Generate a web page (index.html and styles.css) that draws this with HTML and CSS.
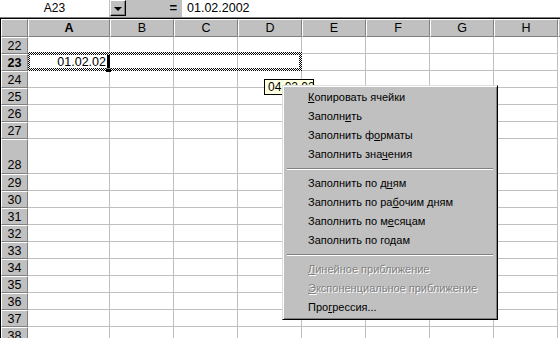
FILE: index.html
```html
<!DOCTYPE html>
<html>
    <head>
        <meta charset="utf-8">
        <link rel="stylesheet" href="styles.css">
    </head>
    <body>
        <div id="excel">
            <div id="formula-bar">
                <div class="name-box">A23</div>
                <div class="name-drop"><span class="arrow"></span></div>
                <div class="equals">=</div>
                <div class="formula">01.02.2002</div>
            </div>
            <div id="sheet">
                <div class="hd corner"></div>
                <div class="hd sel">A</div>
                <div class="hd">B</div>
                <div class="hd">C</div>
                <div class="hd">D</div>
                <div class="hd">E</div>
                <div class="hd">F</div>
                <div class="hd">G</div>
                <div class="hd">H</div>
                <div class="hd rest"></div>

                <div class="rh">22</div><div class="c"></div><div class="c"></div><div class="c"></div><div class="c"></div><div class="c"></div><div class="c"></div><div class="c"></div><div class="c"></div><div class="rest"></div>
                <div class="rh sel">23</div><div class="c val">01.02.02</div><div class="c"></div><div class="c"></div><div class="c"></div><div class="c"></div><div class="c"></div><div class="c"></div><div class="c"></div><div class="rest"></div>
                <div class="rh">24</div><div class="c"></div><div class="c"></div><div class="c"></div><div class="c"></div><div class="c"></div><div class="c"></div><div class="c"></div><div class="c"></div><div class="rest"></div>
                <div class="rh">25</div><div class="c"></div><div class="c"></div><div class="c"></div><div class="c"></div><div class="c"></div><div class="c"></div><div class="c"></div><div class="c"></div><div class="rest"></div>
                <div class="rh">26</div><div class="c"></div><div class="c"></div><div class="c"></div><div class="c"></div><div class="c"></div><div class="c"></div><div class="c"></div><div class="c"></div><div class="rest"></div>
                <div class="rh">27</div><div class="c"></div><div class="c"></div><div class="c"></div><div class="c"></div><div class="c"></div><div class="c"></div><div class="c"></div><div class="c"></div><div class="rest"></div>
                <div class="rh tall">28</div><div class="c"></div><div class="c"></div><div class="c"></div><div class="c"></div><div class="c"></div><div class="c"></div><div class="c"></div><div class="c"></div><div class="rest"></div>
                <div class="rh">29</div><div class="c"></div><div class="c"></div><div class="c"></div><div class="c"></div><div class="c"></div><div class="c"></div><div class="c"></div><div class="c"></div><div class="rest"></div>
                <div class="rh">30</div><div class="c"></div><div class="c"></div><div class="c"></div><div class="c"></div><div class="c"></div><div class="c"></div><div class="c"></div><div class="c"></div><div class="rest"></div>
                <div class="rh">31</div><div class="c"></div><div class="c"></div><div class="c"></div><div class="c"></div><div class="c"></div><div class="c"></div><div class="c"></div><div class="c"></div><div class="rest"></div>
                <div class="rh">32</div><div class="c"></div><div class="c"></div><div class="c"></div><div class="c"></div><div class="c"></div><div class="c"></div><div class="c"></div><div class="c"></div><div class="rest"></div>
                <div class="rh">33</div><div class="c"></div><div class="c"></div><div class="c"></div><div class="c"></div><div class="c"></div><div class="c"></div><div class="c"></div><div class="c"></div><div class="rest"></div>
                <div class="rh">34</div><div class="c"></div><div class="c"></div><div class="c"></div><div class="c"></div><div class="c"></div><div class="c"></div><div class="c"></div><div class="c"></div><div class="rest"></div>
                <div class="rh">35</div><div class="c"></div><div class="c"></div><div class="c"></div><div class="c"></div><div class="c"></div><div class="c"></div><div class="c"></div><div class="c"></div><div class="rest"></div>
                <div class="rh">36</div><div class="c"></div><div class="c"></div><div class="c"></div><div class="c"></div><div class="c"></div><div class="c"></div><div class="c"></div><div class="c"></div><div class="rest"></div>
                <div class="rh">37</div><div class="c"></div><div class="c"></div><div class="c"></div><div class="c"></div><div class="c"></div><div class="c"></div><div class="c"></div><div class="c"></div><div class="rest"></div>
                <div class="rh">38</div><div class="c"></div><div class="c"></div><div class="c"></div><div class="c"></div><div class="c"></div><div class="c"></div><div class="c"></div><div class="c"></div><div class="rest"></div>
            </div>

            <!-- things drawn over the grid -->
            <div class="marquee"></div>
            <div class="active-edge"></div>
            <div class="fill-handle"></div>
            <div class="tip">04.02.02</div>

            <div id="context-menu">
                <div class="item"><u>К</u>опировать ячейки</div>
                <div class="item">Заполн<u>и</u>ть</div>
                <div class="item">Заполнить ф<u>о</u>рматы</div>
                <div class="item">Заполнить зна<u>ч</u>ения</div>
                <div class="sep"></div>
                <div class="item">Заполнить по д<u>н</u>ям</div>
                <div class="item">Заполнить по ра<u>б</u>очим дням</div>
                <div class="item">Заполнить по м<u>е</u>сяцам</div>
                <div class="item">Заполнить по го<u>д</u>ам</div>
                <div class="sep"></div>
                <div class="item disabled"><u>Л</u>инейное приближение</div>
                <div class="item disabled"><u>Э</u>кспоненциальное приближение</div>
                <div class="item">Про<u>г</u>рессия...</div>
            </div>
        </div>
    </body>
</html>
```

FILE: styles.css
```css
body{
    margin:0;
    width:560px;
    height:338px;
    overflow:hidden;
    background-color:#C0C0C0;
    font-family:'Liberation Sans', Arial, sans-serif;
    color:#000;
}

#excel{
    position:relative;
    width:560px;
    height:338px;
    overflow:hidden;
}

#formula-bar{
    display:flex;
    height:17px;
    border-bottom:1px solid #808080;
    background-color:#C0C0C0;
    font-size:12.5px;
    line-height:16px;
}

#formula-bar > .name-box{
    width:109px;
    margin-right:1px;
    background-color:#fff;
    text-align:center;
    font-size:12px;
}

#formula-bar > .name-drop{
    box-sizing:border-box;
    width:16px;
    height:16px;
    border:1px solid;
    border-color:#fff #000 #000 #fff;
    box-shadow:inset -1px -1px 0 #808080;
    display:flex;
    align-items:center;
    justify-content:center;
}

#formula-bar > .name-drop > .arrow{
    width:0;
    height:0;
    margin:1px 1px 0 0;
    border-top:4px solid #000;
    border-left:4px solid transparent;
    border-right:4px solid transparent;
}

#formula-bar > .equals{
    width:56px;
    box-sizing:border-box;
    padding-right:5px;
    text-align:right;
    font-weight:bold;
    font-size:13px;
}

#formula-bar > .formula{
    flex:1;
    background-color:#fff;
    padding-left:5px;
}

#sheet{
    display:grid;
    grid-template-columns:27px 82px repeat(7, 64px) 2px;
    grid-template-rows:18px repeat(6, 17px) 35px repeat(10, 17px);
    border-top:1px solid #000;
    border-left:1px solid #000;
    background-color:#fff;
    font-size:12px;
    line-height:16px;
}

#sheet > div{
    box-sizing:border-box;
}

#sheet > .hd, #sheet > .rh{
    background-color:#C0C0C0;
    border-top:1px solid #fff;
    border-left:1px solid #fff;
    border-right:1px solid #808080;
    border-bottom:1px solid #808080;
    text-align:center;
    font-size:12.5px;
}

#sheet > .hd.rest{
    border-right:0;
}

#sheet > .sel{
    font-weight:bold;
}

#sheet > .rh.tall{
    padding-top:17px;
}

#sheet > .c{
    border-right:1px solid #C0C0C0;
    border-bottom:1px solid #C0C0C0;
}

#sheet > .c.val{
    text-align:right;
    padding-right:3px;
    font-size:12.5px;
}

.marquee{
    position:absolute;
    left:28px;
    top:52px;
    width:274px;
    height:19px;
    box-sizing:border-box;
    padding:3px 3px 3px 2px;
    background:repeating-conic-gradient(#000 0 25%, #fff 0 50%) 0 0 / 2px 2px;
    -webkit-mask:linear-gradient(#000 0 0) content-box, linear-gradient(#000 0 0);
    -webkit-mask-composite:xor;
    mask-composite:exclude;
}

.active-edge{
    position:absolute;
    left:107px;
    top:55px;
    width:3px;
    height:13px;
    background-color:#000;
}

.fill-handle{
    position:absolute;
    left:106px;
    top:68px;
    width:5px;
    height:4px;
    background-color:#000;
    box-shadow:inset 0 1px 0 #808080;
}

.tip{
    position:absolute;
    left:264px;
    top:79px;
    width:50px;
    height:16px;
    box-sizing:border-box;
    border:1px solid #000;
    background-color:#FFFFE1;
    padding-left:3px;
    font-size:12px;
    line-height:14px;
}

#context-menu{
    position:absolute;
    left:282px;
    top:85px;
    width:216px;
    box-sizing:border-box;
    padding:2px;
    border:1px solid;
    border-color:#DFDFDF #000 #000 #DFDFDF;
    box-shadow:inset 1px 1px 0 #fff, inset -1px -1px 0 #808080;
    background-color:#C0C0C0;
    font-size:11px;
}

#context-menu > .item{
    height:19px;
    line-height:19px;
    padding-left:23px;
    white-space:nowrap;
}

#context-menu > .item.disabled{
    color:#808080;
    text-shadow:1px 1px 0 #fff;
}

#context-menu > .sep{
    height:10px;
    display:flex;
    flex-direction:column;
    justify-content:flex-start;
    padding:4px 2px 0;
    box-sizing:border-box;
}

#context-menu > .sep::before{
    content:'';
    display:block;
    border-top:1px solid #808080;
    border-bottom:1px solid #fff;
}
```
